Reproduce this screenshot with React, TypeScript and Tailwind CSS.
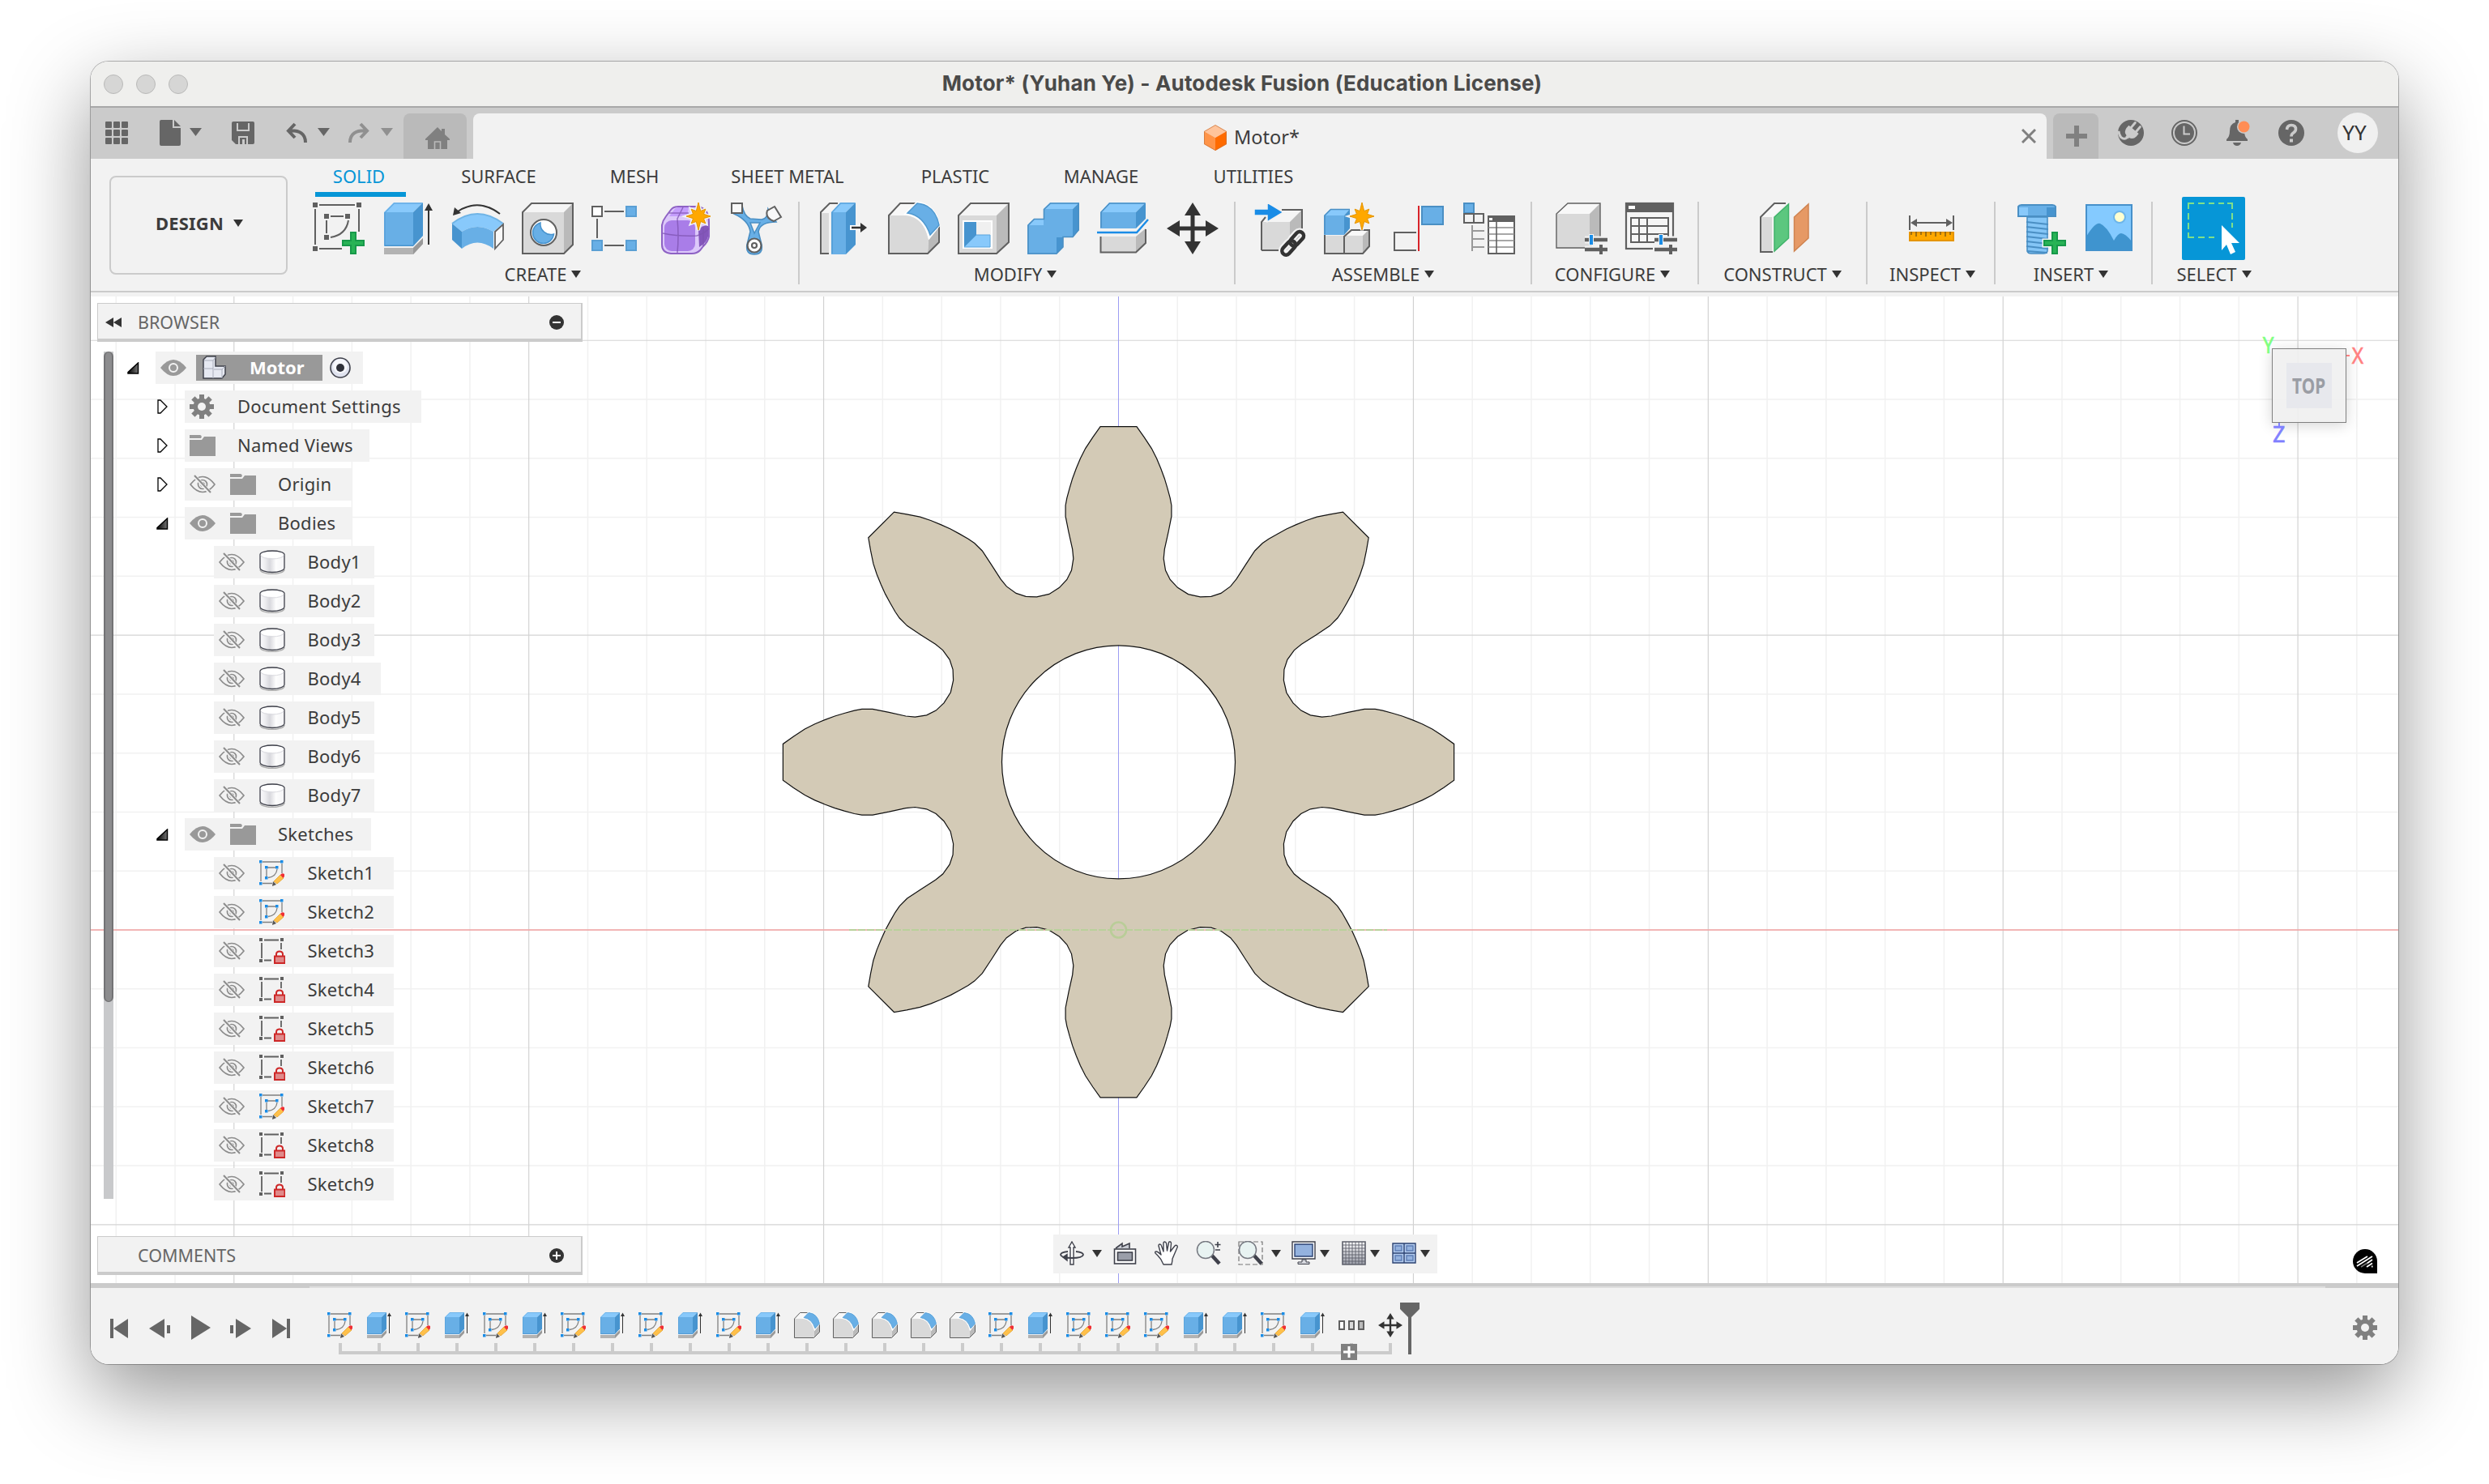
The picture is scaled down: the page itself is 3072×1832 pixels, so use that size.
import React from "react";

const BLUE = "#68afe6";
const LIGHT = "#88c9fb";
const DARK = "#4794cf";
const GRAY = "#606060";

type IconProps = { children: React.ReactNode; size?: string };

function Icon({ children, size = "w-16 h-16" }: IconProps) {
  return (
    <svg viewBox="0 0 64 64" className={`${size} shrink-0 overflow-visible`} fill="none">
      {children}
    </svg>
  );
}

function Caret({ className = "h-[9px] w-3 text-[#333333]" }: { className?: string }) {
  return (
    <svg viewBox="0 0 12 9" preserveAspectRatio="none" className={`shrink-0 ${className}`}>
      <path d="M0 0H12L6 9Z" fill="currentColor" />
    </svg>
  );
}

function Star({ cx, cy }: { cx: number; cy: number }) {
  const outer = [17, 12.5, 15, 12.5, 17, 12.5, 15, 12.5];
  const pts: string[] = [];
  outer.forEach((r, i) => {
    const a = (i * Math.PI) / 4 - Math.PI / 2;
    const b = a + Math.PI / 8;
    pts.push(`${cx + r * Math.cos(a)},${cy + r * Math.sin(a)}`);
    pts.push(`${cx + 7 * Math.cos(b)},${cy + 7 * Math.sin(b)}`);
  });
  return (
    <>
      <polygon points={pts.join(" ")} stroke="#f2f2f2" strokeWidth="4" />
      <polygon points={pts.join(" ")} fill="#ffa800" stroke="#e69500" strokeWidth="1" />
    </>
  );
}

function GreenPlus() {
  return (
    <>
      <path d="M46 36h8v10h10v8H54v10h-8V54H36v-8h10Z" stroke="#f2f2f2" strokeWidth="3" />
      <path d="M47 37h6v10h10v6H53v10h-6V53H37v-6h10Z" fill="#28b355" stroke="#17994a" strokeWidth="2" />
    </>
  );
}

/* ---------- ribbon icons ---------- */

const SketchIcon = () => (
  <Icon>
    <g stroke={GRAY} strokeWidth="2">
      <path d="M8 3H52M3 8V52M57 8V36M8 57H36M22 17H38M17 22V38M44 22Q41 40 22 43" />
    </g>
    <g fill={GRAY}>
      <path d="M0 0h6v6H0ZM54 0h6v6h-6ZM0 54h6v6H0ZM14 14h6v6h-6ZM40 14h6v6h-6ZM14 40h6v6h-6Z" />
    </g>
    <GreenPlus />
  </Icon>
);

const ExtrudeIcon = ({ size }: { size?: string }) => (
  <Icon size={size}>
    <path d="M2 56H38L50 44V51L38 64H2Z" fill="#b3b3b3" />
    <path d="M38 56L50 44V51L38 64Z" fill="#999" />
    <path d="M2 12H38V54H2Z" fill={BLUE} />
    <path d="M2 12L14 0H50L38 12Z" fill={LIGHT} />
    <path d="M38 12L50 0V41L38 54Z" fill={DARK} />
    <path d="M3 53V12.500L14.500 1H49" stroke={DARK} strokeOpacity=".5" strokeWidth="1.500" />
    <path d="M3 53.200H38" stroke={DARK} strokeWidth="1.500" />
    <path d="M57 8V52" stroke="#333" strokeWidth="2" />
    <path d="M57 1L62 10H52Z" fill="#333" />
  </Icon>
);

const RevolveIcon = () => (
  <Icon>
    <path d="M59 14Q33 -6 7 11" stroke="#333" strokeWidth="2" />
    <path d="M1 16L3 6L11 13Z" fill="#333" />
    <path d="M0 26Q31 2 63 26L51 36Q31 24 12 36Z" fill={LIGHT} />
    <path d="M0 26Q31 2 63 26" stroke="#6fb4e6" strokeWidth="2" />
    <path d="M12 36Q31 24 51 36V57Q31 42 12 57Z" fill={BLUE} />
    <path d="M0 26L12 36V57L0 46Z" fill={DARK} />
    <path d="M53 36L63 27V46L53 57Z" fill="#f8f8f8" stroke={GRAY} strokeWidth="1.800" />
  </Icon>
);

const HoleIcon = () => (
  <Icon>
    <path d="M1 12L12 1H63L52 12Z" fill="#f5f5f5" />
    <path d="M1 12H52V63H1Z" fill="#d9d9d9" />
    <path d="M52 12L63 1V52L52 63Z" fill="#bababa" />
    <path d="M1 12L12 1H63V52L52 63H1Z" stroke={GRAY} strokeWidth="2" />
    <circle cx="27" cy="37" r="16" fill="#fff" stroke={GRAY} strokeWidth="2" />
    <path d="M23 25A13 13 0 1 0 39.500 39A13 13 0 0 1 23 25Z" fill={BLUE} stroke={DARK} strokeWidth="1.500" />
  </Icon>
);

const PatternIcon = () => (
  <Icon>
    <path d="M16 11H40M7 20V44M16 53H40" stroke={GRAY} strokeWidth="2" />
    <rect x="1" y="5" width="12" height="12" fill="#fff" stroke={GRAY} strokeWidth="2" />
    <g fill={BLUE} stroke="#5a9fd4" strokeWidth="2">
      <rect x="43" y="5" width="12" height="12" />
      <rect x="1" y="47" width="12" height="12" />
      <rect x="43" y="47" width="12" height="12" />
    </g>
  </Icon>
);

const FormIcon = () => (
  <Icon>
    <path d="M1 28Q2 22 6 17L12 9Q15 5 21 5H46Q59 8 59 24V42Q58 48 52 54L48 59Q44 63 38 63H12Q1 62 1 52Z" fill="#dcc8fa" stroke="#8e62c4" strokeWidth="2" />
    <path d="M10 17L16 9Q18 6 22 6H34L32 17Z" fill="#c49dfc" />
    <rect x="4" y="22" width="38" height="38" rx="9" fill="#a97de8" />
    <path d="M46 34Q50 28 58 28V42Q56 50 47 55Z" fill="#8457bb" />
    <path d="M2 38Q22 42 44 41Q54 38 59 32M20 62Q22 42 20 20Q24 12 27 6M10 13H34M52 30V54" stroke="#7d53b0" strokeOpacity=".75" strokeWidth="1.500" />
    <Star cx={46} cy={17} />
  </Icon>
);

const PipeIcon = () => (
  <Icon>
    <path d="M4 14Q22 22 24 36L20 52Q18 64 29 64Q40 64 38 52L34 36Q36 24 56 24L46 8Q46 20 38 21L24 20Q16 16 14 4Z" fill={BLUE} stroke="#4a8fc4" strokeWidth="1.600" />
    <path d="M24 25H36L29 38Z" fill="#f2f2f2" stroke="#4a8fc4" strokeWidth="1.500" />
    <rect x="1" y="1" width="13" height="12" fill="#f8f8f8" stroke={GRAY} strokeWidth="2" />
    <path d="M45 10L54 5L62 18L53 23Q42 19 45 10Z" fill="#f8f8f8" stroke={GRAY} strokeWidth="2" />
    <circle cx="29" cy="53" r="8.500" fill="#fff" stroke={GRAY} strokeWidth="2.200" />
    <circle cx="29" cy="53" r="3" fill="#fff" stroke={GRAY} strokeWidth="2.200" />
  </Icon>
);

const PressPullIcon = () => (
  <Icon>
    <path d="M3 12L14 1H24L14 12V63H3Z" fill="#f5f5f5" />
    <path d="M4 13H13V63H4Z" fill="#d9d9d9" />
    <path d="M24 1H14L3 12V63H13" stroke={GRAY} strokeWidth="2" />
    <path d="M16 12H34V64H16Z" fill={BLUE} />
    <path d="M16 12L27 0H46L34 12Z" fill={LIGHT} />
    <path d="M34 12L46 0V52L34 64Z" fill={DARK} />
    <path d="M17 63V12L27.500 1H45" stroke={DARK} strokeWidth="1.500" strokeOpacity=".7" />
    <path d="M39 31H54" stroke="#fff" strokeWidth="6" />
    <path d="M41 31H54" stroke="#333" strokeWidth="2.600" />
    <path d="M52 25L60 31L52 37Z" fill="#333" />
  </Icon>
);

const FilletIcon = ({ size }: { size?: string }) => (
  <Icon size={size}>
    <path d="M1 16L15 1H34L22 16Z" fill="#f8f8f8" />
    <path d="M50 46L63 29V50L49 63Z" fill="#bababa" />
    <path d="M1 16H22Q44 18 50 46L49 63H1Z" fill="#d9d9d9" />
    <path d="M34 1H15L1 16V63H49L63 49V29" stroke={GRAY} strokeWidth="2" />
    <path d="M22 14L36 0Q58 3 63 28L51 43Q44 16 22 14Z" fill="#fff" stroke="#fff" strokeWidth="3" />
    <path d="M24 13L36 1Q58 3 63 28L52 40Q44 16 24 13Z" fill={BLUE} stroke="#5099d0" strokeWidth="1.500" />
  </Icon>
);

const ShellIcon = () => (
  <Icon>
    <path d="M1 16L16 1H63L48 16Z" fill="#f5f5f5" />
    <path d="M48 16L63 1V49L48 63Z" fill="#bababa" />
    <path d="M1 16H48V63H1Z" fill="#d9d9d9" />
    <path d="M1 16L16 1H63V49L48 63H1Z" stroke={GRAY} strokeWidth="2" />
    <path d="M6 22H43V57H6Z" fill="#fff" />
    <path d="M8 24H41V55H8Z" fill="#f0f0f0" />
    <path d="M8 24H23V40L8 55Z" fill={DARK} />
    <path d="M23 40H40V55H8Z" fill={LIGHT} stroke="#5aa5dd" strokeWidth="1" />
  </Icon>
);

const CombineIcon = () => (
  <Icon>
    <path d="M20 8L28 0H64L56 8ZM0 28L8 20H21L20 28Z" fill={LIGHT} />
    <path d="M56 8L64 0V34L56 43ZM36 43H44V55L36 64Z" fill={DARK} />
    <path d="M20 8H56V43H36V64H0V28H20Z" fill={BLUE} />
    <path d="M1 63V28L8.500 20.500H20.500V8.500L28.500 1H63V34L56 42.500H44V55L36 63Z" stroke="#4a8fc4" strokeWidth="1.600" />
  </Icon>
);

const SplitIcon = () => (
  <Icon>
    <path d="M4 12L15 0H60L48 12Z" fill={LIGHT} />
    <path d="M48 12L60 0V20L48 32Z" fill={DARK} />
    <path d="M4 12H48V32H4Z" fill={BLUE} />
    <path d="M5 31V12L15.500 1H59" stroke="#4a8fc4" strokeWidth="1.500" />
    <path d="M4 42H48V62H4Z" fill="#d9d9d9" />
    <path d="M48 42L60 32V51L48 62Z" fill="#bababa" />
    <path d="M4.500 42V61.500H48L60 50V33" stroke={GRAY} strokeWidth="2" />
    <path d="M0 37H49L63 21" stroke="#1a8ce6" strokeWidth="2.400" />
  </Icon>
);

const MoveIcon = ({ size }: { size?: string }) => (
  <Icon size={size}>
    <path d="M32 0L42 16H34.500V29.500H48V22L64 32L48 42V34.500H34.500V48H42L32 64L22 48H29.500V34.500H16V42L0 32L16 22V29.500H29.500V16H22Z" fill="#333" />
  </Icon>
);

const InsertDeriveIcon = () => (
  <Icon>
    <path d="M9 24L22 9H59L44 24Z" fill="#f5f5f5" />
    <path d="M44 24L59 9V44L44 59Z" fill="#bababa" />
    <path d="M9 24H44V59H9Z" fill="#d9d9d9" />
    <path d="M34 9H59V40M9 59H30M9 59V24L14 18" stroke={GRAY} strokeWidth="2" />
    <path d="M0 8H16V0L36 12L16 24V16H0Z" fill="#1a8ce6" stroke="#f2f2f2" strokeWidth="1.500" />
    <g transform="rotate(-48 48 50)" strokeWidth="9" stroke="#f2f2f2">
      <rect x="30" y="45" width="19" height="10" rx="5" />
      <rect x="46" y="45" width="19" height="10" rx="5" />
    </g>
    <g transform="rotate(-48 48 50)" strokeWidth="4.500" stroke="#333">
      <rect x="30" y="45" width="20" height="10" rx="5" />
      <rect x="45" y="45" width="20" height="10" rx="5" />
    </g>
  </Icon>
);

const NewComponentIcon = () => (
  <Icon>
    <path d="M1 41H25V63H1ZM26 41H48V63H26Z" fill="#d9d9d9" />
    <path d="M26 40L34 33H56L48 41Z" fill="#f8f8f8" />
    <path d="M48 41L56 33V54L48 63Z" fill="#bababa" />
    <path d="M1 40V63H48L56 54V34H34L25 42V63" stroke={GRAY} strokeWidth="2" />
    <path d="M0 16H25V40H0Z" fill={BLUE} />
    <path d="M0 16L8 8H32L25 16Z" fill={LIGHT} />
    <path d="M25 16L32 8V32L25 40Z" fill={DARK} />
    <path d="M1 39V16L8.500 8.500H32" stroke="#4a8fc4" strokeWidth="1.500" />
    <Star cx={47} cy={17} />
  </Icon>
);

const JointIcon = () => (
  <Icon>
    <path d="M28 37H1V59H28" stroke={GRAY} strokeWidth="2" />
    <rect x="35" y="5" width="26" height="22" fill={BLUE} stroke="#4a8fc4" strokeWidth="2" />
    <path d="M31 4V60" stroke="#d8232a" strokeWidth="2" />
  </Icon>
);

const BomIcon = () => (
  <Icon>
    <rect x="1" y="1" width="12" height="12" fill={BLUE} stroke="#4a8fc4" strokeWidth="2" />
    <path d="M1 14H25V25H1ZM13 14V25" stroke={GRAY} strokeWidth="2" />
    <path d="M11 28V60M11 35H26M11 45H26M11 55H26" stroke="#999" strokeWidth="2" />
    <rect x="31" y="17" width="32" height="46" fill="#fff" stroke={GRAY} strokeWidth="2" />
    <path d="M30 16H64V24H30Z" fill={GRAY} />
    <path d="M32 19h4v3h-4Z" fill="#fff" />
    <path d="M31 31H63M31 39H63M31 47H63M31 55H63" stroke="#8a8a8a" strokeWidth="1.600" />
    <path d="M41 24V63" stroke={GRAY} strokeWidth="1.600" />
  </Icon>
);

const Sliders = () => (
  <>
    <path d="M36 46H64M36 58H64" stroke="#f2f2f2" strokeWidth="9" />
    <path d="M36 46H64M36 58H64" stroke={GRAY} strokeWidth="4.500" />
    <path d="M44 39V53" stroke="#f2f2f2" strokeWidth="6" />
    <path d="M44 40V52" stroke="#1a8ce6" strokeWidth="4" />
    <path d="M56 52V64" stroke={GRAY} strokeWidth="4" />
  </>
);

const ConfigureIcon = () => (
  <Icon>
    <path d="M1 14L15 1H55L42 14Z" fill="#f8f8f8" />
    <path d="M42 14L55 1V44L42 56Z" fill="#bababa" />
    <path d="M1 14H42V56H1Z" fill="#d9d9d9" />
    <path d="M55 44V1H15L1 14V56H40" stroke={GRAY} strokeWidth="1.400" />
    <Sliders />
  </Icon>
);

const ConfigTableIcon = () => (
  <Icon>
    <rect x="1" y="1" width="58" height="56" fill="#f5f5f5" stroke={GRAY} strokeWidth="2.200" />
    <path d="M0 0H60V12H0Z" fill={GRAY} />
    <path d="M4 4h8v4H4Z" fill="#fff" />
    <path d="M7 19H53V49H7ZM7 29H53M7 39H53M17 19V49M27 19V49" stroke={GRAY} strokeWidth="2" />
    <path d="M34 50H66V66H34Z" fill="#f2f2f2" />
    <Sliders />
  </Icon>
);

const ConstructIcon = () => (
  <Icon>
    <path d="M3 18L20 1H34L18 18Z" fill="#f8f8f8" />
    <path d="M3 18H17V61H3Z" fill="#d9d9d9" />
    <path d="M34 1H20L3 18V61H18" stroke={GRAY} strokeWidth="2" />
    <path d="M20 18L37.500 2V44L20 60Z" fill="#5cc77f" stroke="#3fb36a" strokeWidth="1.500" />
    <path d="M44.500 18L62 2V44L44.500 60Z" fill="#e69965" stroke="#cf8350" strokeWidth="1.500" />
  </Icon>
);

const InspectIcon = () => (
  <Icon>
    <path d="M5 16V34M59 16V34M10 25H54" stroke={GRAY} strokeWidth="2" />
    <path d="M6 25L14 20V30ZM58 25L50 20V30Z" fill={GRAY} />
    <rect x="5" y="37" width="54" height="10" fill="#ffa800" stroke="#e69500" strokeWidth="2" />
    <path d="M7 36V40M13 36V42M19 36V40M25 36V42M31 36V40M37 36V42M43 36V40M49 36V42M55 36V40" stroke="#8a6314" strokeWidth="1.600" />
  </Icon>
);

const BoltIcon = () => (
  <Icon>
    <path d="M5 5Q6 3 9 3H47Q50 3 51 5V17H5Z" fill={BLUE} stroke="#4a8fc4" strokeWidth="2" />
    <path d="M6 6H17V16H6Z" fill={LIGHT} />
    <path d="M40 6H50V16H40Z" fill={DARK} />
    <path d="M16 18H41V60Q40 63 36 63H21Q17 63 16 60Z" fill="#84c5f6" stroke="#4a8fc4" strokeWidth="1.600" />
    <path d="M15 24L42 27M15 30L42 33M15 36L42 39M15 42L42 45M15 48L42 51M15 54L42 57M16 60L41 62" stroke="#4a8fc4" strokeWidth="2.200" />
    <GreenPlus />
  </Icon>
);

const ImageIcon = () => (
  <Icon>
    <rect x="3" y="3" width="56" height="56" fill="#84caff" stroke="#4791cb" strokeWidth="2" />
    <path d="M3 42Q14 24 20 26Q28 29 37 47Q42 38 46 38Q51 38 59 48V59H3Z" fill="#3f94cf" />
    <circle cx="44" cy="18" r="7" fill="#ffffd0" stroke="#6db5ea" strokeWidth="2" />
  </Icon>
);

const SelectIcon = () => (
  <div className="flex h-[78px] w-[78px] shrink-0 items-center justify-center rounded-[2px] bg-[#0696d7]">
    <Icon>
      <path d="M1 8V1H8M13 1H21M26 1H33M38 1H45M49 1H55V8M55 13V21M55 25V31M1 13V21M1 25V33M1 37V43H8M13 43H21M26 43H33" stroke="#7fe08a" strokeWidth="2" />
      <path d="M42 28V59L48 52L53 64L59 61L54 50H64Z" fill="#fff" />
    </Icon>
  </div>
);

/* ---------- title and tab strip ---------- */

function TitleBar() {
  return (
    <header className="relative flex h-[57px] items-center justify-center border-b-2 border-[#a8a8a8] bg-[#efefed] pr-[6px] pb-px">
      <div className="absolute top-4 left-4 flex gap-4">
        {[0, 1, 2].map((i) => (
          <span key={i} className="h-6 w-6 rounded-full border border-[#b9b9b8] bg-[#d6d6d5]" />
        ))}
      </div>
      <h1 className="font-[Inter] text-[26px] leading-none font-bold tracking-[0.17px] whitespace-pre text-[#4a4a49]">
        Motor* (Yuhan Ye) - Autodesk Fusion (Education License)
      </h1>
    </header>
  );
}

function TabStrip() {
  return (
    <div className="flex h-[63px] items-start bg-[#cbcbcb] text-[#666666]">
      <svg viewBox="0 0 28 28" className="mt-[17px] ml-[18px] h-7 w-7 shrink-0" fill="currentColor">
        {[0, 10, 20].map((y) => [0, 10, 20].map((x) => <rect key={`${x}-${y}`} x={x} y={y} width="8" height="8" rx="1" />))}
      </svg>
      <svg viewBox="0 0 26 32" className="mt-[15px] ml-[39px] h-8 w-[26px] shrink-0" fill="currentColor">
        <path d="M2 0H16V10H26V30Q26 32 24 32H2Q0 32 0 30V2Q0 0 2 0ZM18 0L26 8H18Z" />
      </svg>
      <Caret className="mt-[25px] ml-[11px] h-[10px] w-[15px] text-[#666666]" />
      <svg viewBox="0 0 28 28" className="mt-[17px] ml-[37px] h-7 w-7 shrink-0">
        <path d="M2 0H26Q28 0 28 2V26Q28 28 26 28H5L0 23V2Q0 0 2 0Z" fill="currentColor" />
        <path d="M7 2V11H21V2M9 28V19H19V28" fill="none" stroke="#cbcbcb" strokeWidth="2" />
        <path d="M13 22H16V28H13Z" fill="#cbcbcb" />
      </svg>
      <svg viewBox="0 0 26 26" className="mt-[18px] ml-[39px] h-[26px] w-[26px] shrink-0" fill="none" stroke="currentColor" strokeWidth="4">
        <path d="M11 2L3 10.500L11 19M3.500 10.500Q24 9 24 25" />
      </svg>
      <Caret className="mt-[25px] ml-[13px] h-[10px] w-[15px] text-[#666666]" />
      <svg viewBox="0 0 26 26" className="mt-[18px] ml-[23px] h-[26px] w-[26px] shrink-0 text-[#909090]" fill="none" stroke="currentColor" strokeWidth="4">
        <path d="M15 2L23 10.500L15 19M22.500 10.500Q2 9 2 25" />
      </svg>
      <Caret className="mt-[25px] ml-[14px] h-[10px] w-[15px] text-[#909090]" />
      <div className="mt-[7px] ml-[13px] flex h-14 w-[78px] justify-center rounded-t-lg bg-[#bababa] pt-[17px] pl-[6px]">
        <svg viewBox="0 0 30 27" className="h-[27px] w-[30px]">
          <path d="M15 0L20 5V2H24V9L30 14.500V16H27V27H3V16H0V14.500Z" fill="#808080" />
          <path d="M11.500 27V18H18.500V27" fill="#808080" stroke="#bababa" strokeWidth="1.600" />
        </svg>
      </div>
      <div className="mt-[7px] ml-2 flex h-14 w-[1942px] items-center rounded-t-lg bg-[#f2f2f2]">
        <div className="ml-[902px] flex items-center gap-[9px] pt-[3px]">
          <svg viewBox="0 0 28 32" className="h-8 w-7">
            <path d="M14 0L28 8L14 16L0 8Z" fill="#ffc49b" />
            <path d="M0 8L14 16V32L0 24Z" fill="#ff9448" />
            <path d="M28 8L14 16V32L28 24Z" fill="#ff6b00" />
            <path d="M14 .5L27.500 8.300V23.700L14 31.500L.5 23.700V8.300Z" fill="none" stroke="#c9743a" strokeOpacity=".7" />
          </svg>
          <span className="text-[23.500px] leading-none text-[#3c3c3c]">Motor*</span>
        </div>
        <svg viewBox="0 0 18 18" className="mr-[13px] ml-auto h-[18px] w-[18px]" stroke="#808080" strokeWidth="3">
          <path d="M1 1L17 17M17 1L1 17" />
        </svg>
      </div>
      <div className="mt-[7px] ml-2 flex h-14 w-14 items-center justify-center rounded-t-lg bg-[#bababa] pl-[2px]">
        <svg viewBox="0 0 26 26" className="h-[26px] w-[26px]" stroke="#808080" strokeWidth="6">
          <path d="M13 0V26M0 13H26" />
        </svg>
      </div>
      <svg viewBox="0 0 32 32" className="mt-[15px] ml-6 h-8 w-8 shrink-0">
        <circle cx="16" cy="16" r="16" fill="currentColor" />
        <g transform="rotate(40 16 16)">
          <path d="M12 3V11M20 3V11" stroke="#cbcbcb" strokeWidth="3" strokeLinecap="round" />
          <path d="M8 10.500H24V15Q23.500 21 18 22V24H14V22Q8.500 21 8 15Z" fill="#cbcbcb" />
          <path d="M16 23Q16 28 10 28Q6 27 3 24" stroke="#cbcbcb" strokeWidth="3" fill="none" />
        </g>
      </svg>
      <svg viewBox="0 0 32 32" className="mt-[15px] ml-[34px] h-8 w-8 shrink-0" fill="none">
        <circle cx="16" cy="16" r="15" stroke="currentColor" strokeWidth="2" />
        <circle cx="16" cy="16" r="12" fill="currentColor" />
        <path d="M15.500 7.500V17.500H23" stroke="#cbcbcb" strokeWidth="2" />
      </svg>
      <svg viewBox="0 0 30 32" className="mt-[15px] ml-9 h-8 w-[30px] shrink-0" fill="currentColor">
        <path d="M11 0H15V3Q22 5 22 14Q22 21 26 24V26H0V24Q4 21 4 14Q4 5 11 3ZM8 28H18Q17 32 13 32Q9 32 8 28Z" />
        <circle cx="21.500" cy="8.500" r="8.500" fill="#cbcbcb" />
        <circle cx="21.500" cy="8.500" r="7" fill="#ff8d55" />
      </svg>
      <svg viewBox="0 0 32 32" className="mt-[15px] ml-[34px] h-8 w-8 shrink-0" fill="none">
        <circle cx="16" cy="16" r="16" fill="currentColor" />
        <path d="M10.500 12Q11 6.500 16 6.500Q21.500 6.500 21.500 11.500Q21.500 14 18.500 16Q16 17.500 16 20.500" stroke="#cbcbcb" strokeWidth="3.600" />
        <path d="M14 23.500h4v4h-4Z" fill="#cbcbcb" />
      </svg>
      <div className="mt-[6px] ml-[41px] flex h-[50px] w-[50px] items-center justify-center rounded-full bg-[#f0f0f0] pr-2 pb-[2px] text-[26px] leading-none text-[#333333]">
        YY
      </div>
    </div>
  );
}

/* ---------- ribbon ---------- */

const ribbonTabs = [
  { name: "SURFACE", width: "w-[173px]" },
  { name: "MESH", width: "w-[162px]" },
  { name: "SHEET METAL", width: "w-[216px]" },
  { name: "PLASTIC", width: "w-[198px]" },
  { name: "MANAGE", width: "w-[162px]" },
  { name: "UTILITIES", width: "w-[214px]" },
];

type GroupProps = {
  name: string;
  width: string;
  iconShift?: string;
  labelShift?: string;
  last?: boolean;
  children: React.ReactNode;
};

function Group({ name, width, iconShift = "pl-[3px]", labelShift = "", last = false, children }: GroupProps) {
  return (
    <section className={`flex h-[102px] shrink-0 flex-col items-center ${last ? "" : "border-r-2 border-[#cbcbcb]"} ${width}`}>
      <div className={`mt-px flex h-16 items-center gap-[22px] ${iconShift}`}>{children}</div>
      <div className={`mt-3 flex items-center gap-[6px] whitespace-nowrap ${labelShift}`}>
        <span className="leading-6">{name}</span>
        <Caret />
      </div>
    </section>
  );
}

function Ribbon() {
  return (
    <div className="flex h-[163px] items-start bg-[#f2f2f2] text-[22px] text-[#3c3c3c]">
      <div className="mt-[21px] ml-[23px] flex h-[122px] w-[220px] shrink-0 items-center justify-center gap-3 rounded-lg border-2 border-[#cbcbcb] pb-[5px] pl-[2px]">
        <span className="text-[22px] font-bold tracking-[0.2px]">DESIGN</span>
        <Caret />
      </div>
      <div className="flex flex-col">
        <nav className="ml-[2px] flex h-[53px]">
          <div className="flex w-[172px] flex-col items-center text-[#0696d7]">
            <span className="mt-[9px] leading-6">SOLID</span>
            <span className="mt-2 ml-1 h-[6px] w-28 bg-[#0696d7]" />
          </div>
          {ribbonTabs.map((t) => (
            <div key={t.name} className={`pt-[9px] text-center leading-6 whitespace-nowrap ${t.width}`}>
              {t.name}
            </div>
          ))}
        </nav>
        <div className="ml-[10px] flex">
          <Group name="CREATE" width="w-[622px]" iconShift="pl-[2px]" labelShift="pr-[10px]">
            <SketchIcon />
            <ExtrudeIcon />
            <RevolveIcon />
            <HoleIcon />
            <PatternIcon />
            <FormIcon />
            <PipeIcon />
          </Group>
          <Group name="MODIFY" width="w-[538px]" labelShift="pr-1">
            <PressPullIcon />
            <FilletIcon />
            <ShellIcon />
            <CombineIcon />
            <SplitIcon />
            <MoveIcon />
          </Group>
          <Group name="ASSEMBLE" width="w-[366px]">
            <InsertDeriveIcon />
            <NewComponentIcon />
            <JointIcon />
            <BomIcon />
          </Group>
          <Group name="CONFIGURE" width="w-[206px]" labelShift="pr-[6px]">
            <ConfigureIcon />
            <ConfigTableIcon />
          </Group>
          <Group name="CONSTRUCT" width="w-[208px]">
            <ConstructIcon />
          </Group>
          <Group name="INSPECT" width="w-[158px]" labelShift="pl-[4px]" iconShift="pl-[2px]">
            <InspectIcon />
          </Group>
          <Group name="INSERT" width="w-[194px]" labelShift="pr-[6px]">
            <BoltIcon />
            <ImageIcon />
          </Group>
          <Group name="SELECT" width="w-[150px]" iconShift="pl-0" labelShift="pl-px" last>
            <SelectIcon />
          </Group>
        </div>
      </div>
    </div>
  );
}

/* ---------- browser tree ---------- */

const EyeIcon = () => (
  <svg viewBox="0 0 32 20" className="h-5 w-8 shrink-0">
    <path d="M0 10Q16 -10 32 10Q16 30 0 10Z" fill="#999" />
    <circle cx="16" cy="10" r="5" fill="#999" stroke="#f2f2f2" strokeWidth="2" />
  </svg>
);

const EyeOffIcon = () => (
  <svg viewBox="0 0 32 24" className="h-6 w-8 shrink-0" fill="none" stroke="#8c8c8c" strokeWidth="1.700">
    <path d="M1 12Q16 -7 31 12Q16 31 1 12Z" />
    <circle cx="16" cy="12" r="5.500" />
    <circle cx="16" cy="12" r="2" />
    <path d="M5 .5L26 23" stroke="#f2f2f2" strokeWidth="4.500" />
    <path d="M6 1L26 22" strokeWidth="2" />
  </svg>
);

const FolderIcon = () => (
  <svg viewBox="0 0 32 26" className="h-[26px] w-8 shrink-0" fill="#999">
    <path d="M0 0H13Q16 1 14 4H0ZM0 6H15L18 2H32V26H0Z" />
  </svg>
);

function GearGlyph({ className, color }: { className: string; color: string }) {
  return (
    <svg viewBox="-15 -15 30 30" className={className} fill={color}>
      {[0, 45, 90, 135].map((a) => (
        <rect key={a} x="-3" y="-15" width="6" height="30" transform={`rotate(${a})`} />
      ))}
      <circle r="10.500" />
      <circle r="5" fill="#f2f2f2" />
    </svg>
  );
}

const BodyIcon = () => (
  <svg viewBox="0 0 32 30" className="h-[30px] w-8 shrink-0">
    <defs>
      <linearGradient id="cyl" x1="0" x2="1">
        <stop offset="0" stopColor="#fafafc" />
        <stop offset=".2" stopColor="#eeeef1" />
        <stop offset=".4" stopColor="#d8d8dd" />
        <stop offset=".65" stopColor="#fdfdfd" />
        <stop offset="1" stopColor="#f4f4f6" />
      </linearGradient>
    </defs>
    <path d="M1 24A15 5.500 0 0 0 31 24" fill="none" stroke="#aaa" strokeWidth="1.500" />
    <path d="M1 5.500A15 4.500 0 0 1 31 5.500V22A15 5.500 0 0 1 1 22Z" fill="url(#cyl)" stroke="#3f414b" strokeWidth="1.300" />
    <ellipse cx="16" cy="6" rx="14" ry="4" fill="#fff" />
    <path d="M2 6.500A14 4.500 0 0 0 30 6.500" stroke="#dcdce1" fill="none" />
  </svg>
);

const SketchEditIcon = () => (
  <svg viewBox="0 0 32 32" className="h-8 w-8 shrink-0" fill="none">
    <path d="M4 2H26M2 4V26M4 28.500H16M28 4V16M10 9H20M9 11V20M22 11Q21 20 11 21.500" stroke="#808080" strokeWidth="1.300" />
    <path d="M0 0h3.500v3.500H0ZM26 0h3.500v3.500H26ZM0 27h3.500v3.500H0ZM7 7h3.500v3.500H7ZM20 7h3.500v3.500H20ZM7 20h3.500v3.500H7Z" fill="#1a8ce6" />
    <path d="M18 26L26 18L30 22L22 29Z" fill="#ffc04a" stroke="#e3a22c" strokeWidth=".8" />
    <path d="M26 18Q28 15 31 17V20L29.500 22Z" fill="#f02f34" />
    <path d="M17 26L21 30L16 32Z" fill="#555" />
  </svg>
);

const SketchLockIcon = () => (
  <svg viewBox="0 0 32 32" className="h-8 w-8 shrink-0" fill="none">
    <path d="M6 2.500H24M3 6V25M27 6V14M6 27.500H15" stroke={GRAY} strokeWidth="1.800" />
    <path d="M0 0h4v4H0ZM26 0h4v4h-4ZM0 26h4v4H0Z" fill={GRAY} />
    <path d="M21 23V20Q21 16.500 25 16.500Q29 16.500 29 20V23" stroke="#cd2727" strokeWidth="2" />
    <rect x="19" y="22.500" width="12.500" height="8.500" fill="#e08a8a" stroke="#cd2727" strokeWidth="2" />
  </svg>
);

const OpenArrow = () => (
  <svg viewBox="0 0 15 15" className="h-[15px] w-[15px] shrink-0">
    <defs>
      <linearGradient id="tri">
        <stop offset="0" stopColor="#000" />
        <stop offset="1" stopColor="#777" />
      </linearGradient>
    </defs>
    <path d="M1 12.500L13.500 1V14H1Z" fill="url(#tri)" stroke="#000" strokeWidth="1.500" />
  </svg>
);

const ClosedArrow = () => (
  <svg viewBox="0 0 13 18" className="ml-px h-[18px] w-[13px] shrink-0">
    <path d="M1 1H4L12 9L4 17H1Z" fill="#fff" stroke="#000" strokeWidth="1.300" />
  </svg>
);

type Row = { label: string; width: string; icon: "body" | "edit" | "lock" };

const bodies: Row[] = [1, 2, 3, 4, 5, 6, 7].map((n) => ({
  label: `Body${n}`,
  width: n === 4 ? "w-[206px]" : "w-[198px]",
  icon: "body",
}));

const sketches: Row[] = [1, 2, 3, 4, 5, 6, 7, 8, 9].map((n) => ({
  label: `Sketch${n}`,
  width: "w-[222px]",
  icon: n === 1 || n === 2 || n === 7 ? "edit" : "lock",
}));

function Leaf({ row }: { row: Row }) {
  return (
    <li className="mb-2 flex h-10 pl-[124px]">
      <div className={`flex items-center bg-[#f2f2f2] pl-[6px] ${row.width}`}>
        <EyeOffIcon />
        <span className="ml-[18px] flex h-8 items-center">
          {row.icon === "body" ? <BodyIcon /> : row.icon === "edit" ? <SketchEditIcon /> : <SketchLockIcon />}
        </span>
        <span className="ml-[27.500px] pb-[2px]">{row.label}</span>
      </div>
    </li>
  );
}

type BranchProps = { open?: boolean; width: string; label: string; children: React.ReactNode };

function Branch({ open = false, width, label, children }: BranchProps) {
  return (
    <li className="mb-2 flex h-10 items-center pl-[53px]">
      <div className="w-[35px]">{open ? <OpenArrow /> : <ClosedArrow />}</div>
      <div className={`flex h-10 items-center gap-[18px] bg-[#f2f2f2] pl-[6px] ${width}`}>
        {children}
        <span className="ml-[9px] pb-[2px] whitespace-nowrap">{label}</span>
      </div>
    </li>
  );
}

function PanelHeader({ title, open }: { title: string; open: boolean }) {
  return (
    <div className="flex h-12 w-[599px] items-center border border-r-2 border-b-4 border-[#cbcbcb] bg-[#f2f2f2] pt-[2px] text-[21.500px] text-[#666666]">
      <div className="w-[49px] pl-[9px]">
        {open && (
          <svg viewBox="0 0 21 12" className="h-3 w-[21px]">
            <path d="M0 6L10 0V12ZM10 6L20 0V12Z" fill="#333" />
          </svg>
        )}
      </div>
      <span className="flex-1 leading-none">{title}</span>
      <svg viewBox="0 0 18 18" className="mr-[21px] h-[18px] w-[18px]">
        <circle cx="9" cy="9" r="9" fill="#333" />
        <path d={open ? "M4 9H14" : "M4 9H14M9 4V14"} stroke="#fff" strokeWidth="2" />
      </svg>
    </div>
  );
}

function Browser() {
  return (
    <div className="mt-3 flex text-[22px] leading-none tracking-[0.25px] text-[#3c3c3c]">
      <div className="ml-2 h-[1046px] w-3 bg-[#c8c9cb]">
        <div className="h-[803px] rounded-full border-x-2 border-y border-[#737375] bg-[#8c8c8e]" />
      </div>
      <ul>
        <li className="mb-2 flex h-10 items-center pl-[17px]">
          <div className="w-[35px]">
            <OpenArrow />
          </div>
          <div className="flex h-10 w-64 items-center bg-[#f2f2f2] pl-[6px]">
            <EyeIcon />
            <div className="ml-3 flex h-8 w-[156px] items-center bg-[#999999] pl-2">
              <svg viewBox="0 0 30 30" className="h-[30px] w-[30px]">
                <path d="M1 5L5 1H16V13H28V23L24 28H1Z" fill="#e6e9f2" stroke="#3f414b" strokeWidth="1.500" />
                <path d="M1 16H13M13 6V28M13 6L16 2M2 6H13M14 17H24V28M24 17L28 13" stroke="#a9adba" fill="none" />
              </svg>
              <span className="ml-[28px] pb-[2px] font-bold tracking-normal text-white">Motor</span>
            </div>
            <svg viewBox="0 0 26 26" className="ml-[9px] h-[26px] w-[26px]">
              <circle cx="13" cy="13" r="12" fill="#dfe2ee" stroke="#3f414b" strokeWidth="1.600" />
              <circle cx="13" cy="11" r="9" fill="#f6f7fb" />
              <circle cx="13" cy="13" r="5" fill="#2f313a" />
            </svg>
          </div>
        </li>
        <Branch label="Document Settings" width="w-[292px]">
          <GearGlyph className="h-[30px] w-8 pr-[2px]" color="#808080" />
        </Branch>
        <Branch label="Named Views" width="w-[228px]">
          <FolderIcon />
        </Branch>
        <Branch label="Origin" width="w-[206px]">
          <EyeOffIcon />
          <FolderIcon />
        </Branch>
        <Branch open label="Bodies" width="w-[206px]">
          <EyeIcon />
          <FolderIcon />
        </Branch>
        {bodies.map((r) => (
          <Leaf key={r.label} row={r} />
        ))}
        <Branch open label="Sketches" width="w-[230px]">
          <EyeIcon />
          <FolderIcon />
        </Branch>
        {sketches.map((r) => (
          <Leaf key={r.label} row={r} />
        ))}
      </ul>
    </div>
  );
}

/* ---------- model canvas ---------- */

const ORIGIN_X = 1380.5;
const ORIGIN_Y = 1148;
const STEP = 72.78;

const halfTooth: [number, number][] = [
  [39, 721.5], [55, 699], [71, 674.5], [82, 653], [91, 631.5], [99, 610], [105, 589.5], [111, 568], [114, 552],
  [114, 528.5], [107, 493.5], [99, 457.5], [97, 437.5], [101, 412.5], [111, 392.5], [127, 375.5], [150, 361],
];

function gearPath() {
  const k = 1 / 1.7422;
  const axis = Math.PI / 8;
  const polar = halfTooth.map(([x, y]) => ({ r: Math.hypot(x, y) * k, a: Math.atan2(x, y) }));
  const mirrored = polar.slice(0, -1).reverse().map((p) => ({ r: p.r, a: 2 * axis - p.a }));
  const cell = [...polar, ...mirrored];
  const pts: string[] = [];
  for (let i = 0; i < 8; i++) {
    for (const p of cell) {
      const a = p.a + (i * Math.PI) / 4;
      pts.push(`${(ORIGIN_X + p.r * Math.sin(a)).toFixed(1)} ${(940.8 - p.r * Math.cos(a)).toFixed(1)}`);
    }
  }
  return `M${pts.join("L")}ZM1236.500 940.800a144 144 0 1 0 288 0a144 144 0 1 0 -288 0Z`;
}

function Model() {
  const vertical = Array.from({ length: 41 }, (_, i) => i - 18);
  const horizontal = Array.from({ length: 18 }, (_, i) => i - 11);
  return (
    <svg viewBox="112 366 2848 1218" className="absolute inset-0 h-full w-full">
      {vertical.filter((i) => i % 5 !== 0).map((i) => (
        <path key={`v${i}`} d={`M${ORIGIN_X + i * STEP} 366V1584`} stroke="#f1f1f1" strokeWidth="1.500" />
      ))}
      {horizontal.filter((i) => i % 5 !== 0).map((i) => (
        <path key={`h${i}`} d={`M112 ${ORIGIN_Y + i * STEP}H2960`} stroke="#f1f1f1" strokeWidth="1.500" />
      ))}
      {vertical.filter((i) => i % 5 === 0 && i !== 0).map((i) => (
        <path key={`V${i}`} d={`M${ORIGIN_X + i * STEP} 366V1584`} stroke="#cfcfcf" strokeWidth="1.100" />
      ))}
      {horizontal.filter((i) => i % 5 === 0).map((i) => (
        <path key={`H${i}`} d={`M112 ${ORIGIN_Y + i * STEP}H2960`} stroke="#d4d4d4" strokeWidth="1.100" />
      ))}
      <path d="M1380 366H1381V1584H1380Z" fill="#9d9df3" />
      <path d={`M112 ${ORIGIN_Y}H2960`} stroke="#f5a3a3" strokeWidth="1.400" />
      <path d={gearPath()} fill="#d3cab6" fillRule="evenodd" stroke="#111" strokeWidth="1.200" />
      <path d="M1048 1148H1712" stroke="#b9d09b" strokeWidth="1.800" strokeDasharray="9 2" />
      <circle cx={ORIGIN_X} cy={ORIGIN_Y} r="9.500" fill="none" stroke="#b9cd98" strokeWidth="2.600" />
    </svg>
  );
}

function ViewCube() {
  return (
    <div className="absolute top-16 left-[2692px] h-[92px] w-[92px] border border-[#808080] bg-[#efefef]/90 p-[17px] shadow-[0_3px_16px_rgba(0,0,0,0.16)]">
      <div className="flex h-14 w-14 items-center justify-center bg-[#e5e7ec]/90 text-[26px] leading-none font-bold text-[#9a9da4]">
        <span className="scale-x-[0.8]">TOP</span>
      </div>
      <span className="absolute top-[91px] left-[7px] h-1 w-[2px] bg-[#8080ff]" />
      <span className="absolute top-[7px] left-[91px] h-[2px] w-1 bg-[#ff8080]" />
      <span className="absolute -top-[19px] -left-[13px] scale-x-90 text-[27px] leading-none text-[#80ff80] [-webkit-text-stroke:0.6px_#80ff80]">Y</span>
      <span className="absolute -top-[6px] left-[97px] scale-x-90 text-[27px] leading-none text-[#ff8080] [-webkit-text-stroke:0.6px_#ff8080]">X</span>
      <span className="absolute top-[91px] left-0 text-[27px] leading-none text-[#8080ff] [-webkit-text-stroke:0.6px_#8080ff]">Z</span>
    </div>
  );
}

const NAV_INK = "#3f414b";

function NavBar() {
  return (
    <div className="absolute top-[1158px] left-[1188px] flex h-12 w-[474px] items-center bg-[#f2f2f2] pb-[2px]">
      <svg viewBox="0 0 30 30" className="ml-2 h-[30px] w-[30px] shrink-0" fill="none" stroke={NAV_INK} strokeWidth="1.400">
        <path d="M15 1L19 8H17V29H13V8H11Z" fill="#fff" />
        <path d="M20 13Q29 14 29 17Q28 21 15 21Q2 21 1 17Q1 14 10 13" strokeWidth="1.800" />
        <path d="M4 20L9 16.500V24Z" fill={NAV_INK} />
      </svg>
      <span className="ml-[10px]"><Caret /></span>
      <svg viewBox="0 0 30 30" className="ml-[14px] h-[30px] w-[30px] shrink-0" stroke={NAV_INK} strokeWidth="1.600">
        <path d="M3 9L11 3V7L20 3V9" fill="#c9ccd4" />
        <rect x="1.500" y="10" width="26" height="18" fill="#fff" />
        <rect x="5.500" y="14" width="18" height="10" fill="#9a9ea9" />
      </svg>
      <svg viewBox="0 0 30 30" className="ml-[21px] h-[30px] w-[30px] shrink-0" fill="#fff" stroke={NAV_INK} strokeWidth="1.400" strokeLinejoin="round">
        <path d="M10 27Q8 22 4 18L1 15Q0 13 2 13Q4 13 8 17L5 6Q5 4 6.500 4Q8 4 8.500 6L11 13V3Q11 1 12.500 1Q14 1 14.500 3L15.500 12L17.500 2Q18 .5 19.500 1Q20.500 1.500 20.500 3L19.500 13L25 6Q26.500 4.500 28 6Q28.500 7 28 8L22 22Q22 25 21 29H11Z" />
      </svg>
      <svg viewBox="0 0 32 30" className="ml-[21px] h-[30px] w-8 shrink-0" fill="none" stroke={NAV_INK}>
        <path d="M19 17L29 28" strokeWidth="4.500" />
        <circle cx="12" cy="11" r="10.500" fill="#e8f3f2" strokeWidth="1.500" stroke="#777a82" />
        <path d="M27 1V8M23.500 4.500H30.500M24 11H30" strokeWidth="1.600" />
      </svg>
      <svg viewBox="0 0 32 30" className="ml-[20px] h-[30px] w-8 shrink-0" fill="none" stroke={NAV_INK}>
        <path d="M1 1H30V29H1Z" strokeWidth="1.200" strokeDasharray="6 3" stroke="#777" />
        <path d="M19 17L29 28" strokeWidth="4.500" />
        <circle cx="12" cy="11" r="10.500" fill="#e8f3f2" strokeWidth="1.500" stroke="#777a82" />
      </svg>
      <span className="ml-[9px]"><Caret /></span>
      <svg viewBox="0 0 30 30" className="ml-[13px] h-[30px] w-[30px] shrink-0" stroke={NAV_INK} strokeWidth="1.400">
        <path d="M1 1H29V22H1Z" fill="#fff" />
        <path d="M4 4H26V19H4Z" fill="#94b2de" stroke="#2d4373" />
        <path d="M13 23H18V26H22V28.500H8V26H13Z" fill="#d6d8de" strokeWidth="1" />
      </svg>
      <span className="ml-[5px]"><Caret /></span>
      <svg viewBox="0 0 30 30" className="ml-[15px] h-[30px] w-[30px] shrink-0" stroke="#5d606b" strokeWidth=".9">
        <defs>
          <linearGradient id="mesh" x2="0" y2="1">
            <stop offset="0" stopColor="#fff" />
            <stop offset="1" stopColor="#9a9da8" />
          </linearGradient>
        </defs>
        <path d="M1 1H29V29H1Z" fill="url(#mesh)" strokeWidth="1.600" />
        <path d="M5 1V29M9 1V29M13 1V29M17 1V29M21 1V29M25 1V29M1 5H29M1 9H29M1 13H29M1 17H29M1 21H29M1 25H29" />
      </svg>
      <span className="ml-[5px]"><Caret /></span>
      <svg viewBox="0 0 30 26" className="ml-[15px] h-[26px] w-[30px] shrink-0" stroke="#2d4373" strokeWidth="1.400">
        <path d="M1 1H29V25H1ZM15 1V25M1 13H29" fill="#b5cdef" />
        <path d="M4 4H12V10H4ZM18 4H26V10H18ZM4 16H12V22H4ZM18 16H26V22H18Z" fill="#94b2de" stroke="#5d7db5" />
      </svg>
      <span className="ml-[5px]"><Caret /></span>
    </div>
  );
}

/* ---------- timeline ---------- */

const history = "SESESESESESEFFFFFSESSSEESEPM".split("");

function HistoryIcon({ kind }: { kind: string }) {
  if (kind === "S") return <SketchEditIcon />;
  if (kind === "E") return <ExtrudeIcon size="w-8 h-8" />;
  if (kind === "F") return <FilletIcon size="w-8 h-8" />;
  if (kind === "M") return <MoveIcon size="w-[30px] h-8" />;
  return (
    <svg viewBox="0 0 32 32" className="h-8 w-8" stroke={GRAY} strokeWidth="2">
      <path d="M1 11H7V21H1Z" fill="#fff" />
      <path d="M13 11H19V21H13Z" fill="#d9d9d9" />
      <path d="M25 11H31V21H25Z" fill="#bababa" />
    </svg>
  );
}

function Timeline() {
  return (
    <footer className="flex h-[100px] flex-col bg-[#f2f2f2]">
      <div className="h-1 bg-[#cbcbcb]" />
      <div className="flex h-[2px] bg-[#cbcbcb]">
        <div className="ml-[270px] w-[2488px] bg-[#dedede]" />
      </div>
      <div className="flex items-start">
        <div className="mt-[34px] ml-6 flex w-[260px] items-center text-[#666666]">
          <svg viewBox="0 0 22 24" className="mt-[2px] h-6 w-[22px]" fill="currentColor"><path d="M0 0H4V24H0ZM22 0V24L4 12Z" /></svg>
          <svg viewBox="0 0 26 24" className="mt-[2px] ml-[26px] h-6 w-[26px]" fill="currentColor"><path d="M19 0V24L0 12ZM22 8H26V18H22Z" /></svg>
          <svg viewBox="0 0 24 30" className="ml-[26px] h-[30px] w-6" fill="currentColor"><path d="M0 0L24 15L0 30Z" /></svg>
          <svg viewBox="0 0 26 24" className="mt-[2px] ml-6 h-6 w-[26px]" fill="currentColor"><path d="M7 0V24L26 12ZM0 8H4V18H0Z" /></svg>
          <svg viewBox="0 0 22 24" className="mt-[2px] ml-[26px] h-6 w-[22px]" fill="currentColor"><path d="M18 0H22V24H18ZM0 0V24L18 12Z" /></svg>
        </div>
        <div className="relative">
          <div className="flex pt-[30px]">
            {history.map((kind, i) => (
              <div key={i} className="flex w-12 flex-col items-center">
                <HistoryIcon kind={kind} />
                <span className="mt-[6px] h-[10px] w-1 bg-[#cbcbcb]" />
              </div>
            ))}
          </div>
          <div className="ml-[22px] h-1 w-[1300px] bg-[#cbcbcb]" />
          <svg viewBox="0 0 20 20" className="absolute top-[69px] left-[1259px] h-5 w-5">
            <path d="M0 0H20V20H0Z" fill="#808080" />
            <path d="M10 3V17M3 10H17" stroke="#fff" strokeWidth="3" />
          </svg>
          <svg viewBox="0 0 24 64" className="absolute top-[18px] left-[1332px] h-16 w-6">
            <path d="M0 0H24V8L14 18V64H10V18L0 8Z" fill="#666" />
          </svg>
        </div>
        <GearGlyph className="mt-[34px] mr-[26px] ml-auto h-[30px] w-[30px]" color="#808080" />
      </div>
    </footer>
  );
}

export default function App() {
  return (
    <div className="h-[1832px] w-[3072px] overflow-hidden bg-white pt-[76px] pl-[112px] font-['Noto_Sans','Open_Sans',sans-serif]">
      <div className="h-[1608px] w-[2848px] rounded-[22px] shadow-[0_0_0_1px_rgba(0,0,0,0.28),0_36px_100px_rgba(0,0,0,0.42)]">
        <main className="flex h-full flex-col overflow-hidden rounded-[22px] bg-[#f2f2f2]">
          <TitleBar />
          <TabStrip />
          <Ribbon />
          <div className="h-[7px] border-t-2 border-[#cbcbcb] bg-[#f2f2f2]" />
          <div className="relative h-[1218px] overflow-hidden bg-white">
            <Model />
            <div className="relative flex h-full flex-col pt-2 pb-[10px] pl-2">
              <PanelHeader title="BROWSER" open />
              <Browser />
              <div className="mt-auto">
                <PanelHeader title="COMMENTS" open={false} />
              </div>
            </div>
            <NavBar />
            <ViewCube />
            <svg viewBox="0 0 30 30" className="absolute top-[1176px] left-[2792px] h-[30px] w-[30px]">
              <path d="M15 0A15 15 0 0 1 30 15V30H15A15 15 0 0 1 15 0Z" fill="#000" />
              <path d="M5 17L18 9M5 21L24 9M17 18L24 13M17 22L24 17.500M23 21.500H24.500" stroke="#fff" strokeWidth="1.800" />
              <path d="M10 22L18 17" stroke="#777" strokeWidth="1.500" />
            </svg>
          </div>
          <Timeline />
        </main>
      </div>
    </div>
  );
}
